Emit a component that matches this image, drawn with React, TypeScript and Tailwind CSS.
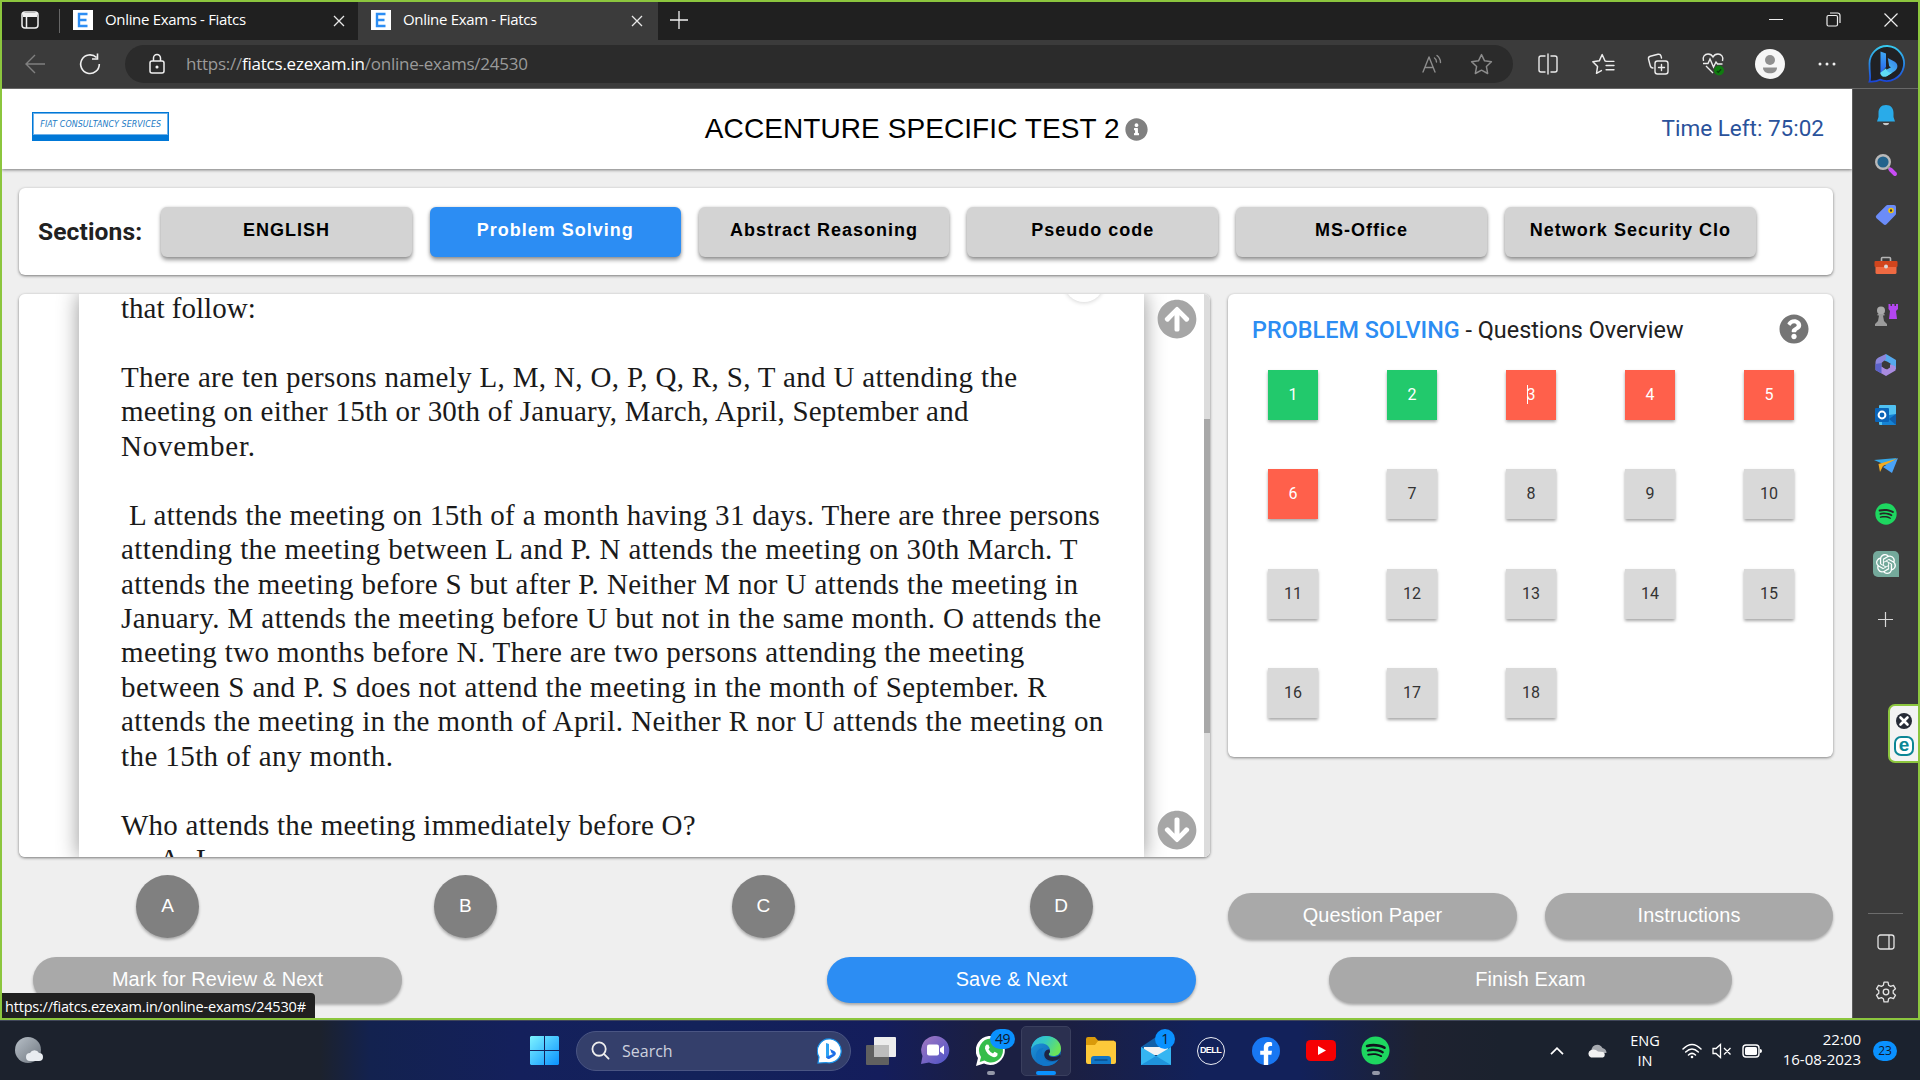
import React from "react";
import { FaSpotify, FaInfoCircle, FaQuestionCircle, FaArrowCircleUp, FaArrowCircleDown } from "react-icons/fa";
import { SiOpenai } from "react-icons/si";

const ui = "font-['Open_Sans','Noto_Sans',sans-serif]";
const arial = "font-['Liberation_Sans',Arial,sans-serif]";

type IconProps = { size?: number; className?: string; children: React.ReactNode };

function Line({ size = 22, className = "", children }: IconProps) {
  return (
    <svg width={size} height={size} viewBox="0 0 22 22" fill="none" stroke="currentColor" strokeWidth={1.4} strokeLinecap="round" strokeLinejoin="round" className={className}>
      {children}
    </svg>
  );
}

function Art({ size = 24, className = "", children }: IconProps) {
  return (
    <svg width={size} height={size} viewBox="0 0 24 24" fill="none" className={className}>
      {children}
    </svg>
  );
}

function Tab({ title, active }: { title: string; active?: boolean }) {
  return (
    <div className={active ? "flex h-full w-[300px] items-center bg-[#3b3b3b] pb-[2px] pl-[13px]" : "flex h-full w-[298px] items-center rounded-br-[6px] pb-[2px] pl-[13px]"}>
      <svg width="20" height="20" viewBox="0 0 20 20" className="shrink-0">
        <rect width="20" height="20" fill="#fff" />
        <path d="M14.5 4H6v12h8.5M6 10h7.500" fill="none" stroke="#2c8df3" strokeWidth="2.400" />
      </svg>
      <span className={`ml-[12px] w-[227px] pb-px text-[15px] tracking-[-0.33px] text-white ${ui}`}>{title}</span>
      <svg width="14" height="14" viewBox="0 0 14 14" stroke="#e8e8e8" strokeWidth="1.300" className="mt-[2px] shrink-0">
        <path d="M2 2l10 10M12 2L2 12" />
      </svg>
    </div>
  );
}

function TabStrip() {
  return (
    <div className="flex h-[38px] shrink-0 items-center bg-[#202020]">
      <svg width="18" height="18" viewBox="0 0 18 18" fill="none" stroke="#f0f0f0" strokeWidth="1.500" className="mb-[2px] ml-[19px]">
        <rect x="1" y="1" width="16" height="16" rx="3" />
        <path d="M2 4h14" strokeWidth="4" />
        <path d="M5.500 5v12" />
      </svg>
      <div className="ml-[20px] h-[24px] w-px bg-[#666]" />
      <Tab title="Online Exams - Fiatcs" />
      <Tab title="Online Exam - Fiatcs" active />
      <svg width="18" height="18" viewBox="0 0 18 18" stroke="#f0f0f0" strokeWidth="1.300" className="mb-[3px] ml-[12px]">
        <path d="M9 0v18M0 9h18" />
      </svg>
      <div className="mb-[3px] ml-auto mr-[20px] flex items-center gap-[43px]">
        <div className="h-px w-[14px] bg-[#eee]" />
        <svg width="15" height="15" viewBox="0 0 15 15" fill="none" stroke="#eee" strokeWidth="1.200">
          <rect x="1" y="3.500" width="10.500" height="10.500" rx="1.500" />
          <path d="M4 1h7.500a2.500 2.500 0 0 1 2.500 2.500V11" />
        </svg>
        <svg width="14" height="14" viewBox="0 0 14 14" stroke="#eee" strokeWidth="1.200">
          <path d="M.5.5l13 13M13.500.5l-13 13" />
        </svg>
      </div>
    </div>
  );
}

function BingBubble({ size }: { size: number }) {
  return (
    <svg width={size} height={size} viewBox="0 0 38 38" fill="none">
      <defs>
        <linearGradient id="bingRing" x1="0" y1="0" x2="0" y2="1">
          <stop stopColor="#36c9ee" />
          <stop offset="1" stopColor="#1a46d8" />
        </linearGradient>
        <linearGradient id="bingStem" x1="0" y1="0" x2="0" y2="1">
          <stop stopColor="#3fa9f5" />
          <stop offset="1" stopColor="#2560e8" />
        </linearGradient>
        <linearGradient id="bingBowl" x1="0" y1="1" x2="1" y2="0">
          <stop stopColor="#5fe0f5" />
          <stop offset="1" stopColor="#2f7bea" />
        </linearGradient>
      </defs>
      <path d="M19.500 1A17.500 17.500 0 1 1 12 34.700C8 37 4 36.500 1.500 36.500 3 33 1.500 30 1.500 19A17.500 17.500 0 0 1 19.500 1z" fill="#202124" stroke="url(#bingRing)" strokeWidth="1.800" />
      <path d="M12.500 6.500l5.500 2v13.500l-5.500 7z" fill="url(#bingStem)" />
      <path d="M19.800 13l7 3.800c3.500 2 3.500 7 0 9.200l-7.300 4.700c-3.500 2-7 .5-7-3l10.500-5.500-1.800-1z" fill="url(#bingBowl)" />
      <path d="M12.500 27.700c0 3.500 3.500 5 7 3l5-3.200c-3 .8-6-.5-6.500-4.200z" fill="#5fdcf5" />
    </svg>
  );
}

function Toolbar() {
  return (
    <div className="flex h-[49px] shrink-0 items-center border-b border-[#686868] bg-[#3b3b3b] text-[#ececec]">
      <svg width="22" height="22" viewBox="0 0 22 22" fill="none" stroke="#808080" strokeWidth="1.400" className="ml-[22px]">
        <path d="M21 11H2M11 2l-9 9 9 9" />
      </svg>
      <svg width="24" height="24" viewBox="0 0 24 24" fill="none" stroke="#f0f0f0" strokeWidth="1.600" className="ml-[32px]">
        <path d="M18.500 5.500A9.300 9.300 0 1 0 21.300 12M19.500 1.500v5.500h-5.500" />
      </svg>
      <div className="ml-[23px] flex h-[38px] w-[1388px] items-center rounded-full bg-[#2b2b2b]">
        <svg width="18" height="22" viewBox="0 0 18 22" fill="none" stroke="#f0f0f0" strokeWidth="1.500" className="ml-[23px]">
          <rect x="2" y="8" width="14" height="12" rx="2" />
          <path d="M5.500 8V5a3.500 3.500 0 0 1 7 0v3" />
          <circle cx="9" cy="14" r=".8" fill="#fff" />
        </svg>
        <span className={`ml-[20px] text-[17px] tracking-[-0.24px] text-[#9a9a9a] ${ui}`}>
          https://<span className="text-white">fiatcs.ezexam.in</span>/online-exams/24530
        </span>
        <Line size={22} className="ml-auto text-[#8c8c8c]">
          <path d="M2 19L8 4l6 15M4 14.500h8M13.500 5c1.500 1 2 2.500 2 4M16 2.500c2.500 2 3.500 4 3.500 7" />
        </Line>
        <Line size={23} className="ml-[27px] mr-[20px] text-[#8c8c8c]">
          <path d="M11 1.500l2.900 6 6.600.9-4.800 4.600 1.200 6.600-5.900-3.200-5.900 3.200 1.200-6.600L1.500 8.400l6.600-.9z" />
        </Line>
      </div>
      <Line size={22} className="ml-[24px]">
        <path d="M8 3H4a2 2 0 0 0-2 2v12a2 2 0 0 0 2 2h4M14 3h4a2 2 0 0 1 2 2v12a2 2 0 0 1-2 2h-4M11 1v20" />
      </Line>
      <Line size={23} className="ml-[33px]">
        <path d="M14 8l-1.500-.3L9.700 1.500 7 7.500l-6.200.9 4.500 4.600-1 6.500L9 16.800M13.500 8H21M13.500 12H21M13.500 16H21" />
      </Line>
      <Line size={22} className="ml-[32px]">
        <rect x="8" y="8" width="13" height="13" rx="2.500" />
        <path d="M14.500 11.500v6M11.500 14.500h6M6 15c-2 0-2.500-1-2.800-2.500L1.500 6c-.3-1.500.5-2.500 1.800-2.800L11 1.300c1.500-.3 2.500.2 3 1.700l.5 2" />
      </Line>
      <svg width="24" height="24" viewBox="0 0 24 24" fill="none" stroke="#ececec" strokeWidth="1.400" className="ml-[32px]">
        <path d="M2.500 9C1 4.500 4 2 7 2c2 0 4 1 5 3 1-2 3-3 5-3 3 0 6 2.500 4.500 7M2 11.500h5l2-4.500 3.500 8 2.500-5 1.500 2h5M5 14l7 7" />
        <circle cx="18" cy="18.500" r="5" fill="#107c10" stroke="none" />
        <path d="M15.800 19l1.500 1.300 2.800-3" stroke="#0b3f0b" />
      </svg>
      <svg width="30" height="30" viewBox="0 0 30 30" className="ml-[30px]">
        <circle cx="15" cy="15" r="15" fill="#f6f6f6" />
        <circle cx="15" cy="11" r="5" fill="#8f8f8f" />
        <path d="M8 18.500h14c0 4-3 5.800-7 5.800s-7-1.800-7-5.800z" fill="#8f8f8f" />
      </svg>
      <svg width="18" height="4" viewBox="0 0 18 4" fill="#f0f0f0" className="ml-[33px]">
        <circle cx="2" cy="2" r="1.500" />
        <circle cx="9" cy="2" r="1.500" />
        <circle cx="16" cy="2" r="1.500" />
      </svg>
      <div className="ml-[32px]">
        <BingBubble size={38} />
      </div>
    </div>
  );
}

function PageHeader() {
  return (
    <header className="relative z-10 flex h-[80px] shrink-0 items-center justify-between bg-white pl-[30px] pr-[28px] shadow-[0_1px_3px_rgba(0,0,0,0.5)]">
      <div className="mb-[5px] flex h-[29px] w-[137px] items-center justify-center border border-b-[6px] border-[#0078d7] bg-white shadow-[inset_0_0_0_1px_#6fb1e8]">
        <span className="scale-x-[0.88] whitespace-nowrap pt-px text-[9px] italic tracking-[0.1px] text-[#1b7ac4] font-['DejaVu_Sans',sans-serif]">FIAT CONSULTANCY SERVICES</span>
      </div>
      <div className="ml-[22px] flex items-center gap-[6px]">
        <h1 className={`text-[28px] leading-none tracking-[0.08px] text-black ${arial}`}>ACCENTURE SPECIFIC TEST 2</h1>
        <FaInfoCircle size={23} color="#808080" className="-ml-px" />
      </div>
      <div className="pb-[2px] text-[22.500px] leading-none text-[#2a529b] font-[Roboto,sans-serif]">Time Left: 75:02</div>
    </header>
  );
}

const sections = ["ENGLISH", "Problem Solving", "Abstract Reasoning", "Pseudo code", "MS-Office", "Network Security Clo"];

function Sections() {
  return (
    <div className="ml-[17px] mr-[19px] mt-[19px] flex h-[87px] shrink-0 items-center rounded-[6px] bg-white pl-[19px] shadow-[0_1px_3px_rgba(0,0,0,0.5)]">
      <span className="w-[123px] pt-px text-[24.600px] font-bold leading-none tracking-[0.1px] text-[#212121] font-[Roboto,sans-serif]">Sections:</span>
      <div className="flex gap-[18px]">
        {sections.map((s) => (
          <button
            key={s}
            className={`flex h-[50px] w-[250.800px] shrink-0 items-center justify-center whitespace-nowrap rounded-[6px] pb-[3px] text-[18px] font-bold tracking-[1px] shadow-[0_3px_4px_rgba(0,0,0,0.4),0_0_3px_rgba(0,0,0,0.15)] ${arial} ${s === "Problem Solving" ? "bg-[#2c8df3] text-white" : "bg-[#d3d3d3] text-black"}`}
          >
            {s}
          </button>
        ))}
      </div>
    </div>
  );
}

const passage: [string, string][] = [
  ["that follow:", "tracking-[0.02px]"],
  ["", ""],
  ["There are ten persons namely L, M, N, O, P, Q, R, S, T and U attending the", "tracking-[0.34px]"],
  ["meeting on either 15th or 30th of January, March, April, September and", "tracking-[0.24px]"],
  ["November.", "tracking-[0.75px]"],
  ["", ""],
  ["L attends the meeting on 15th of a month having 31 days. There are three persons", "pl-[8px] tracking-[0.32px]"],
  ["attending the meeting between L and P. N attends the meeting on 30th March. T", "tracking-[0.4px]"],
  ["attends the meeting before S but after P. Neither M nor U attends the meeting in", "tracking-[0.39px]"],
  ["January. M attends the meeting before U but not in the same month. O attends the", "tracking-[0.41px]"],
  ["meeting two months before N. There are two persons attending the meeting", "tracking-[0.39px]"],
  ["between S and P. S does not attend the meeting in the month of September. R", "tracking-[0.415px]"],
  ["attends the meeting in the month of April. Neither R nor U attends the meeting on", "tracking-[0.42px]"],
  ["the 15th of any month.", "tracking-[0.41px]"],
  ["", ""],
  ["Who attends the meeting immediately before O?", "tracking-[0.25px]"],
  ["A. L", "pl-[38px] tracking-[0.5px]"],
];

function Question() {
  return (
    <div className="relative flex h-[563px] w-[1191px] overflow-hidden rounded-[6px] bg-white">
      <div className="ml-[60px] w-[1065px] bg-white pl-[42px] shadow-[0_0_20px_rgba(0,0,0,0.42)]">
        <div className="-mt-[3px] text-[29px] leading-[34.45px] text-[#1a1a1a] font-['Liberation_Serif',serif]">
          {passage.map(([t, c], i) => (
            <div key={i} className={`h-[34.45px] whitespace-nowrap ${c}`}>
              {t}
            </div>
          ))}
        </div>
      </div>
      <div className="absolute left-[1045px] top-[-32px] size-[40px] rounded-full bg-white shadow-[0_1px_4px_rgba(0,0,0,0.16)]" />
      <div className="ml-[13px] flex w-[40px] flex-col justify-between py-[5px]">
        <FaArrowCircleUp size={40} color="#a6a6a6" />
        <FaArrowCircleDown size={40} color="#a6a6a6" className="mb-[2px]" />
      </div>
      <div className="ml-auto h-full w-[6px] bg-[#dcdcdc] pt-[125px]">
        <div className="h-[314px] bg-[#a8a8a8]" />
      </div>
    </div>
  );
}

function status(n: number) {
  if (n <= 2) return "bg-[#22c96c] text-white";
  if (n <= 6) return "bg-[#ff604b] text-white";
  return "bg-[#d9d9d9] text-[#333]";
}

function Overview() {
  return (
    <div className="h-[463px] w-[605px] rounded-[6px] bg-white pt-[19px] shadow-[0_1px_3px_rgba(0,0,0,0.45)]">
      <div className="flex h-[32px] items-center justify-between pl-[24px] pr-[24px] text-[23.400px] text-[#212121] font-[Roboto,sans-serif]">
        <div className="mt-[3px] whitespace-nowrap">
          <span className="font-medium text-[#2c8df3]">PROBLEM SOLVING</span> - Questions Overview
        </div>
        <FaQuestionCircle size={30} color="#757575" className="mb-px" />
      </div>
      <div className="ml-[40px] mt-[25px] grid grid-cols-[repeat(5,50px)] gap-x-[69px] gap-y-[49.3px] text-[16px] font-[Roboto,sans-serif]">
        {Array.from({ length: 18 }, (_, i) => i + 1).map((n) => (
          <div key={n} className={`relative flex h-[50px] items-center justify-center shadow-[0_2px_3px_rgba(0,0,0,0.35)] ${status(n)}`}>
            {n}
            {n === 3 && <div className="absolute left-[21px] top-[15px] h-[19px] w-px bg-white" />}
          </div>
        ))}
      </div>
    </div>
  );
}

function Pill({ label, className }: { label: string; className: string }) {
  return (
    <button className={`h-[46px] shrink-0 rounded-full text-[19.900px] tracking-[0.1px] text-white shadow-[0_2px_3px_rgba(0,0,0,0.3)] ${arial} ${className}`}>
      {label}
    </button>
  );
}

function Page() {
  return (
    <main className="flex h-[929px] w-[1850px] flex-col overflow-hidden bg-[#efefef]">
      <PageHeader />
      <Sections />
      <div className="mt-[19px] flex gap-[18px] pl-[17px]">
        <div className="w-[1191px]">
          <div className="rounded-[6px] shadow-[0_1px_3px_rgba(0,0,0,0.5)]">
            <Question />
          </div>
          <div className="ml-[117px] mt-[18px] flex gap-[234.900px]">
            {["A", "B", "C", "D"].map((o) => (
              <div key={o} className={`flex size-[63px] items-center justify-center rounded-full bg-[#808080] text-[19px] text-white shadow-[0_2px_3px_rgba(0,0,0,0.3)] ${arial}`}>
                {o}
              </div>
            ))}
          </div>
          <div className="ml-[14px] mt-[19px] flex gap-[425px]">
            <Pill label="Mark for Review & Next" className="w-[369px] bg-[#a9a9a9]" />
            <Pill label="Save & Next" className="w-[369px] bg-[#2c8df3]" />
          </div>
        </div>
        <div className="w-[605px]">
          <Overview />
          <div className="mt-[136px] flex justify-between">
            <Pill label="Question Paper" className="w-[289px] bg-[#a9a9a9]" />
            <Pill label="Instructions" className="w-[288px] bg-[#a9a9a9]" />
          </div>
          <div className="mt-[18px] flex justify-center">
            <Pill label="Finish Exam" className="w-[403px] bg-[#a9a9a9]" />
          </div>
        </div>
      </div>
    </main>
  );
}

function Sidebar() {
  return (
    <aside className="flex w-[66px] flex-col items-center border-l border-[#5c5c5c] bg-[#3b3b3b] pt-[1px]">
      <div className="flex h-[510px] flex-col pl-[1px] [&>*]:my-[13px]">
        <Art>
          <path d="M12 2c5 0 7.500 3.500 7.500 8v4l1.500 4.500H3l1.500-4.500v-4c0-4.500 2.500-8 7.500-8z" fill="#29abe9" />
          <path d="M9 20h6c0 3-6 3-6 0z" fill="#c9c9c9" />
        </Art>
        <Art>
          <circle cx="9" cy="9" r="6.800" fill="#23638c" stroke="#b9b9b9" strokeWidth="2.400" />
          <path d="M14 14l3 3" stroke="#999" strokeWidth="2.500" />
          <path d="M16.500 16.500l4.500 4.500" stroke="#c84cf5" strokeWidth="4" strokeLinecap="round" />
        </Art>
        <Art>
          <path d="M13.500 2H20q2 0 2 2v6.500q0 1-.8 1.800l-8.700 9q-1.500 1.200-3 0l-7-6q-1.500-1.500 0-3L12 2.700q.7-.7 1.500-.7z" fill="#6b8cf8" />
          <circle cx="17" cy="7.500" r="2" fill="#333" stroke="#f2c40f" strokeWidth="1.600" />
        </Art>
        <Art>
          <path d="M7.500 8V5.500q0-1 1-1h7q1 0 1 1V8" stroke="#b5b5b5" strokeWidth="1.600" />
          <rect x="1.500" y="12" width="21" height="9" rx="1.500" fill="#ef6a42" />
          <rect x="0.500" y="8" width="23" height="6" rx="1" fill="#d1451d" />
          <circle cx="12" cy="13.500" r="2" fill="#d9d9d9" />
        </Art>
        <Art>
          <path d="M14.500 1h2v2h1.500V1h2.500v2H22V1h2v5l-2 2 1 8h-8l1-8-1.500-2z" fill="#b346f0" />
          <circle cx="7" cy="7.500" r="4" fill="#a9a9a9" />
          <path d="M3.500 11h7v1.500H9L10 18l3 3v2H1v-2l3-3 1-5.500H3.500z" fill="#9b9b9b" />
        </Art>
        <Art>
          <path d="M12 1l10 6v9.500l-5.500-3V10.500L9.500 7z" fill="#55a9ee" />
          <path d="M12 1L4.500 4.500Q1.500 6 1.500 9.500v7.500l6 -3.500V10l4.500-4z" fill="#8c86dc" />
          <path d="M1.500 17l10.500 6 9.500-5.500q.5-3-.5-4.500l-4.500-1.500-5 4.500-4-2.500z" fill="#a98be0" />
          <path d="M1.500 11v6l6 3.500V10z" fill="#5b62c8" />
          <path d="M9.500 9.500l3.500-1 3 2.500v3.500l-3 2-3.500-2z" fill="#3b3b3b" />
        </Art>
        <Art>
          <rect x="5" y="2" width="17" height="20" rx="1" fill="#50c2f2" />
          <path d="M8 12h7l7-1v10q0 1-1 1H8z" fill="#1583d4" />
          <path d="M22 11v11l-7-6z" fill="#0e5fae" />
          <rect x="1" y="5" width="14" height="14" rx="1" fill="#0a64b8" />
          <circle cx="8" cy="12" r="3.400" stroke="#fff" strokeWidth="2" />
        </Art>
        <Art>
          <path d="M0 7l23-2-9 8z" fill="#35a8ea" />
          <path d="M24 5L9 14l9 6z" fill="#4aa3f8" />
          <path d="M4.500 11L23.500 5.500 9 13l-3 6z" fill="#f3ac22" />
        </Art>
        <FaSpotify size={22} color="#1ed760" className="mx-px bg-[radial-gradient(#262626_60%,transparent_62%)]" />
        <div className="mx-[-1px] mt-[15px] flex size-[26px] items-center justify-center rounded-[5px] rounded-br-none bg-[#74a99b]">
          <SiOpenai size={20} color="#fff" />
        </div>
      </div>
      <svg width="15" height="15" viewBox="0 0 15 15" stroke="#d8d8d8" strokeWidth="1.200" className="mt-[12px]">
        <path d="M7.500 0v15M0 7.500h15" />
      </svg>
      <div className="mt-auto h-px w-[35px] bg-[#6c6c6c]" />
      <svg width="18" height="16" viewBox="0 0 18 16" fill="none" stroke="#e4e4e4" strokeWidth="1.300" className="mt-[20px]">
        <rect x="1" y="1" width="16" height="14" rx="2.500" />
        <path d="M12 1v14" />
      </svg>
      <svg width="22" height="22" viewBox="0 0 22 22" fill="none" stroke="#e4e4e4" strokeWidth="1.300" strokeLinejoin="round" className="mb-[15px] mt-[31px]">
        <circle cx="11" cy="11" r="2.800" />
        <path d="M9 1.200h4l.6 3 2 1.200 2.900-1 2 3.400-2.300 2v2.400l2.300 2-2 3.400-2.900-1-2 1.200-.6 3H9l-.6-3-2-1.200-2.900 1-2-3.400 2.300-2V9.800l-2.300-2 2-3.400 2.900 1 2-1.200z" />
      </svg>
    </aside>
  );
}

function Slot({ children, running }: { children: React.ReactNode; running?: boolean }) {
  return (
    <div className="relative flex h-[50px] w-[55px] shrink-0 items-center justify-center">
      {children}
      {running && <div className="absolute bottom-[1px] h-[4px] w-[8px] rounded-full bg-[#9498a8]" />}
    </div>
  );
}

function Badge({ children }: { children: React.ReactNode }) {
  return (
    <div className={`absolute left-[27px] top-[3px] flex h-[20px] min-w-[20px] items-center justify-center rounded-full bg-[#0a91ff] px-[5px] text-[14px] leading-none tracking-[-0.5px] text-[#10182c] ${ui}`}>{children}</div>
  );
}

function Taskbar() {
  return (
    <div className="flex h-[60px] items-center border-t border-[#40465a] bg-[linear-gradient(90deg,#1c222d_0,#1c222d_320px,#13224f_370px,#14205c_520px,#13225a_700px,#141d5c_880px,#1b1f42_980px,#1b1f42_1070px,#12215a_1200px,#12215a_1300px,#1e2230_1420px,#1b222e_1500px)]">
      <svg width="30" height="28" viewBox="0 0 30 28" className="ml-[14px]">
        <defs>
          <linearGradient id="moon" x1="0" y1="0" x2="1" y2="1">
            <stop stopColor="#b8c0c8" />
            <stop offset="1" stopColor="#6d757e" />
          </linearGradient>
        </defs>
        <circle cx="14" cy="13" r="13" fill="url(#moon)" />
        <path d="M16 24a4 4 0 0 1 0-8 5 5 0 0 1 9 0 4 4 0 0 1 0 8z" fill="#e9edf1" />
      </svg>
      <div className="ml-[473px] flex w-[55px] justify-center">
        <svg width="29" height="29" viewBox="0 0 29 29">
          <defs>
            <linearGradient id="win" x1="0" y1="0" x2="1" y2="1">
              <stop stopColor="#7df3ff" />
              <stop offset="1" stopColor="#0a91ff" />
            </linearGradient>
          </defs>
          <path d="M1 0h13v14H0V1zM15 0h13l1 1v13H15zM0 15h14v14H1l-1-1zM15 15h14v13l-1 1H15z" fill="url(#win)" />
        </svg>
      </div>
      <div className="ml-[4px] flex h-[40px] w-[275px] items-center rounded-full border border-[#4a5583] bg-[#343f6b] pl-[14px] pr-[7px]">
        <svg width="19" height="19" viewBox="0 0 20 20" fill="none" stroke="#eee" strokeWidth="1.900" strokeLinecap="round">
          <circle cx="8.500" cy="8.500" r="7" />
          <path d="M13.800 13.800l4.700 4.700" />
        </svg>
        <span className={`ml-[12px] text-[16px] text-[#cdd1de] ${ui}`}>Search</span>
        <svg width="26" height="26" viewBox="0 0 26 26" className="ml-auto">
          <path d="M13.500 1A12 12 0 1 1 9 24.500L1 25l1-6A12 12 0 0 1 13.500 1z" fill="#fff" stroke="#168fe8" strokeWidth="1.200" />
          <path d="M9 5l3 1v12l-3 2z" fill="#2ea3f2" />
          <path d="M9 19q1.500 3 4 1.500l4-2.300q3.500-2.500.5-5L13 11l1.500 4 1.500 1z" fill="#1e6fe8" />
        </svg>
      </div>
      <div className="ml-[2px] flex">
        <Slot>
          <svg width="30" height="28" viewBox="0 0 30 28">
            <rect x="0" y="8" width="23" height="20" rx="1" fill="#606060" />
            <rect x="8" y="0" width="22" height="20" rx="1" fill="#ededed" />
            <rect x="8" y="8" width="15" height="12" fill="#bdbdbd" />
          </svg>
        </Slot>
        <Slot>
          <svg width="29" height="29" viewBox="0 0 29 29">
            <defs>
              <linearGradient id="chat" x1="0" y1="0" x2="1" y2="1">
                <stop stopColor="#a478c0" />
                <stop offset="1" stopColor="#4a52c8" />
              </linearGradient>
            </defs>
            <path d="M15 0a14 14 0 1 1-7 26.500L0 28l1.500-8A14 14 0 0 1 15 0z" fill="url(#chat)" />
            <rect x="6" y="8.500" width="12" height="11" rx="2" fill="#fff" />
            <path d="M19 12.500l4-3v9l-4-3z" fill="#fff" />
          </svg>
        </Slot>
        <Slot running>
          <svg width="30" height="30" viewBox="0 0 30 30">
            <path d="M15.500 0A14.500 14.500 0 1 1 8 27.500L0 30l2-8A14.500 14.500 0 0 1 15.500 0z" fill="#fff" />
            <path d="M15.500 2.500A12 12 0 1 1 8.500 24.600L3.700 26l1.300-5A12 12 0 0 1 15.500 2.500z" fill="#35bd4b" />
            <path d="M10.500 8.500l2 .2 1.200 3-1.200 1.500q1.500 3 4.500 4.300l1.500-1.700 3 1.500v2q-1.500 2.500-4.500 1.800Q10.500 18.500 9 12.500q-.3-2.500 1.500-4z" fill="#fff" />
          </svg>
          <Badge>49</Badge>
        </Slot>
        <Slot>
          <div className="relative flex size-[50px] items-center justify-center rounded-[5px] border border-[#3a3f5e] bg-[#2b3050]">
            <svg width="30" height="30" viewBox="0 0 30 30">
              <defs>
                <linearGradient id="edgeTop" x1="0" y1="0" x2="1" y2="0.400">
                  <stop stopColor="#2fb4e8" />
                  <stop offset=".5" stopColor="#35c9c0" />
                  <stop offset="1" stopColor="#6be35a" />
                </linearGradient>
                <linearGradient id="edgeBody" x1="0" y1="0" x2="1" y2="1">
                  <stop stopColor="#1f9be0" />
                  <stop offset="1" stopColor="#0c56a8" />
                </linearGradient>
              </defs>
              <circle cx="15" cy="15" r="15" fill="url(#edgeBody)" />
              <path d="M0 13.500C1 5 7.500 0 15 0c9 0 15 6 15 12.500 0 5-3.500 7.500-7.500 7.500-3.500 0-5-1-4.500-2.500 1-1.500 1-2.500 1-3.500C18.500 10 15 7.500 10.500 7.500 6 7.500 2 9.500 0 13.500z" fill="url(#edgeTop)" />
              <path d="M11 15c-1.500 6 3 11 9 11 3.500 0 6-1 8-3.200C25 28 20 30 15 30 8 30 4 24 5 18.500 6 14 9 12 13 12c-1 .5-1.700 1.700-2 3z" fill="#1177c9" />
              <path d="M18 17.500c-1 2 1 3.500 5 3.500 3 0 5-1 6.200-3l.4 2.500q-2 4-8 4.500c-6 0-9.500-4-8-8.500 1-2.500 3-3.500 5-3q1 2-.6 4z" fill="#1e2442" />
            </svg>
            <div className="absolute bottom-0 h-[4px] w-[20px] rounded-full bg-[#0a91ff]" />
          </div>
        </Slot>
        <Slot>
          <svg width="30" height="27" viewBox="0 0 30 27">
            <path d="M0 2q0-2 2-2h7l3 3.500h16v6H0z" fill="#d99a0b" />
            <path d="M0 8h9l3-4h16q2 0 2 2v19q0 2-2 2H2q-2 0-2-2z" fill="#fdc93a" />
            <path d="M5 27v-5q0-3 3-3h14q3 0 3 3v5z" fill="#1176c6" />
            <path d="M8.500 23h13" stroke="#084a84" strokeWidth="1.300" />
          </svg>
        </Slot>
        <Slot>
          <svg width="30" height="28" viewBox="0 0 30 28">
            <path d="M0 10L15 0l15 10v6H0z" fill="#1260a8" />
            <path d="M3 10h24v8H3z" fill="#f2f2f2" />
            <path d="M0 10l15 9 15-9v18H0z" fill="#35b5f1" />
            <path d="M0 28l15-9 15 9z" fill="#1f93dc" />
          </svg>
          <Badge>1</Badge>
        </Slot>
        <Slot>
          <div className={`flex size-[28px] items-center justify-center rounded-full border-[1.5px] border-[#eceef4] text-[9px] font-bold tracking-[-0.6px] text-white ${arial}`}>DELL</div>
        </Slot>
        <Slot>
          <svg width="28" height="28" viewBox="0 0 28 28">
            <circle cx="14" cy="14" r="14" fill="#1877f2" />
            <path d="M11.800 28V17.800H8.200v-4h3.600v-3.200c0-3.600 2-5.500 5.300-5.500 1.500 0 3 .3 3 .3v3.500h-1.700c-1.700 0-2.200 1-2.200 2.100v2.800h3.800l-.6 4h-3.200V28z" fill="#fff" />
          </svg>
        </Slot>
        <Slot>
          <svg width="30" height="21" viewBox="0 0 30 21">
            <rect width="30" height="21" rx="4.500" fill="#f60002" />
            <path d="M12 6l8 4.500-8 4.500z" fill="#fff" />
          </svg>
        </Slot>
        <Slot running>
          <FaSpotify size={29} color="#1ed760" className="bg-[radial-gradient(#10131c_60%,transparent_62%)]" />
        </Slot>
      </div>
      <div className="ml-auto flex items-center pr-[23px] text-white">
        <svg width="14" height="8" viewBox="0 0 14 8" fill="none" stroke="#fff" strokeWidth="1.700">
          <path d="M1 7.200l6-6 6 6" />
        </svg>
        <svg width="20" height="14" viewBox="0 0 20 14" className="ml-[23px]">
          <path d="M5 9a5.500 5.500 0 0 1 10.500-5q4 1 4 5z" fill="#a6a9af" />
          <path d="M4 13.500a4 4 0 0 1 0-7.500q4-1.500 7 1.500l5 .5a3 3 0 0 1 0 5.500z" fill="#f2f2f2" />
        </svg>
        <div className={`ml-[21px] w-[34px] text-center text-[14.500px] leading-[20px] ${ui}`}>
          ENG
          <br />
          IN
        </div>
        <svg width="20" height="16" viewBox="0 0 20 16" fill="none" stroke="#fff" strokeWidth="1.500" strokeLinecap="round" className="ml-[20px]">
          <path d="M1 6q9-9 18 0M3.700 9q6.300-6 12.600 0M6.500 12q3.500-3.200 7 0" />
          <circle cx="10" cy="14" r="1.300" fill="#fff" stroke="none" />
        </svg>
        <svg width="20" height="16" viewBox="0 0 20 16" fill="none" stroke="#fff" strokeWidth="1.300" className="ml-[10px]">
          <path d="M1 5.500h3l4.500-4v13l-4.500-4H1zM12 5l6.500 6.500M18.500 5L12 11.500" />
        </svg>
        <svg width="20" height="14" viewBox="0 0 20 14" fill="none" className="ml-[10px]">
          <rect x="1" y="1" width="16" height="12" rx="3" stroke="#fff" strokeWidth="1.400" />
          <rect x="3" y="3" width="12" height="8" rx="1.500" fill="#fff" />
          <path d="M18 5q2 0 2 2t-2 2z" fill="#fff" />
        </svg>
        <div className={`ml-[19px] w-[80px] pb-[3px] text-right text-[15px] leading-[20px] ${ui}`}>
          22:00
          <br />
          16-08-2023
        </div>
        <div className={`ml-[12px] flex h-[20px] w-[24px] items-center justify-center rounded-full bg-[#0a91ff] text-[12px] text-[#10182c] ${ui}`}>23</div>
      </div>
    </div>
  );
}

export default function App() {
  return (
    <div className="h-[1080px] w-[1920px] overflow-hidden">
      <div className="relative h-[1020px] w-[1920px] border-2 border-[#8cc63e] bg-[#3b3b3b]">
        <TabStrip />
        <Toolbar />
        <div className="flex h-[929px]">
          <Page />
          <Sidebar />
        </div>
        <div className={`absolute bottom-0 left-0 z-20 h-[25px] w-[313px] rounded-tr-[4px] bg-[#202020] pl-[3px] text-[14.500px] leading-[27px] tracking-[-0.2px] text-white ${ui}`}>
          https://fiatcs.ezexam.in/online-exams/24530#
        </div>
        <div className="absolute -right-[2px] top-[702px] z-20 flex h-[59px] w-[32px] flex-col items-center gap-[7px] rounded-l-[7px] border-2 border-[#8cc63e] bg-[#f3f3f3] pt-[7px]">
          <svg width="16" height="16" viewBox="0 0 16 16">
            <circle cx="8" cy="8" r="8" fill="#262b36" />
            <path d="M4.500 4.500l7 7M11.500 4.500l-7 7" stroke="#fff" strokeWidth="2.600" strokeLinecap="round" />
          </svg>
          <div className={`flex size-[20px] items-center justify-center rounded-[7px] border-2 border-[#0b8695] bg-white text-[19px] font-bold leading-none text-[#0b8695] ${arial}`}>
            <span className="-mt-[4px]">e</span>
          </div>
        </div>
      </div>
      <Taskbar />
    </div>
  );
}
